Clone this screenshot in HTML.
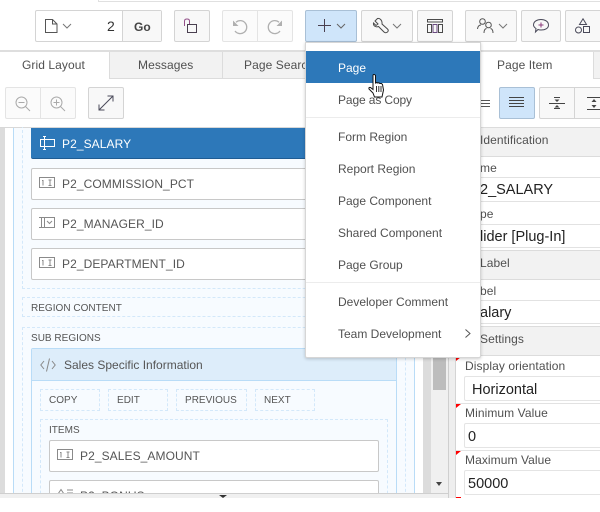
<!DOCTYPE html>
<html><head><meta charset="utf-8"><style>
html,body{margin:0;padding:0}
body{width:600px;height:498px;overflow:hidden;position:relative;background:#fff;font-family:"Liberation Sans",sans-serif;font-size:12px;color:#404040}
.a{position:absolute;box-sizing:border-box}
.t{position:absolute;white-space:nowrap;line-height:16px;letter-spacing:.08px;color:#505050}
.btn{position:absolute;box-sizing:border-box;background:#f8f8f8;border:1px solid #d4d4d4;border-radius:2px}
.item{position:absolute;box-sizing:border-box;background:#fff;border:1px solid #c8c8c8;border-radius:2px;height:32px}
.d{position:absolute;box-sizing:border-box;border:1px dashed #d3e8fa}
.cap{position:absolute;font-size:10px;color:#555;white-space:nowrap;line-height:12px;letter-spacing:.02px}
.it{position:absolute;font-size:12px;color:#555;white-space:nowrap;line-height:16px;letter-spacing:.08px}
.mi{position:absolute;left:338px;color:#505050;white-space:nowrap;line-height:16px;letter-spacing:0}
.hd{position:absolute;left:456px;width:144px;box-sizing:border-box;background:#f2f2f2;border-top:1px solid #dcdcdc;border-bottom:1px solid #dcdcdc}
.lb{position:absolute;color:#505050;white-space:nowrap;line-height:14px;letter-spacing:.08px}
.v{position:absolute;color:#222;font-size:14.5px;white-space:nowrap;line-height:18px}
.ln{position:absolute;left:456px;width:144px;height:1px;background:#e2e2e2}
svg{position:absolute;overflow:visible;fill:none}
</style></head><body>

<!-- top sliver -->
<div class="a" style="left:98px;top:0;width:502px;height:2px;border-bottom:1px solid #e0e0e0;border-left:1px solid #e0e0e0"></div>

<!-- toolbar -->
<div class="btn" style="left:35px;top:10px;width:127px;height:32px;background:#fff"></div>
<div class="a" style="left:122px;top:11px;width:39px;height:30px;background:#f8f8f8;border-left:1px solid #d4d4d4"></div>
<svg style="left:45px;top:19px" width="14" height="14" stroke="#555"><path d="M.5.5H7.500L12 5V13.500H.5ZM7.500.5V5H12"/></svg>
<svg style="left:62px;top:23px" width="10" height="6" stroke="#777"><path d="M1 1L5 5L9 1"/></svg>
<div class="t" style="left:107px;top:18px;font-size:14px;color:#333;letter-spacing:0">2</div>
<div class="t" style="left:134px;top:19px;font-weight:bold;color:#444;letter-spacing:0">Go</div>
<div class="btn" style="left:174px;top:10px;width:36px;height:32px"></div>
<svg style="left:184px;top:18px" width="16" height="16" stroke="#4a4050"><path d="M.5 8V3Q.5 1 3 1T5.500 3V6" stroke="#94508a"/><rect x="3.500" y="6.500" width="9" height="8"/></svg>
<div class="btn" style="left:222px;top:10px;width:71px;height:32px;background:#fbfbfb;border-color:#e4e4e4"></div>
<div class="a" style="left:257px;top:11px;width:1px;height:30px;background:#e4e4e4"></div>
<svg style="left:232px;top:19px" width="16" height="15" stroke="#b0b0b0" stroke-width="1.300"><path d="M4 3.200A6.500 6.500 0 1 1 3 12"/><path d="M1 1.500V7H6.500Z" fill="#b0b0b0" stroke="none"/></svg>
<svg style="left:267px;top:19px" width="16" height="15" stroke="#b0b0b0" stroke-width="1.300"><path d="M12 3.200A6.500 6.500 0 1 0 13 12"/><path d="M15 1.500V7H9.500Z" fill="#b0b0b0" stroke="none"/></svg>

<div class="btn" style="left:305px;top:10px;width:52px;height:32px;background:#cfe5fa;border-color:#a9c0d6"></div>
<svg style="left:318px;top:19px" width="14" height="14" stroke="#4a4050"><path d="M6.500 0V13"/><path d="M0 6.500H13"/></svg>
<svg style="left:336px;top:23px" width="10" height="6" stroke="#666"><path d="M1 1L5 5L9 1"/></svg>
<div class="btn" style="left:361px;top:10px;width:52px;height:32px"></div>
<svg style="left:373px;top:18px" width="17" height="16" stroke="#4a4a4a"><path d="M4.500.5L2 3L5 6L3 7.500L.5 5C0 8 3 9.500 5.500 8.500L11 14Q12.500 15.500 14.500 14Q16 12.500 14.500 11L9 6C9.500 2.500 7 0 4.500.5Z"/></svg>
<svg style="left:392px;top:23px" width="10" height="6" stroke="#777"><path d="M1 1L5 5L9 1"/></svg>
<div class="btn" style="left:417px;top:10px;width:36px;height:32px"></div>
<svg style="left:427px;top:19px" width="16" height="14" stroke="#4a4a4a"><path d="M.5.500H15.500V3H.5Z"/><path d="M.5 5.500H4.500V13.500H.5Z"/><path d="M6 5.500H10V13.500H6Z" stroke="#6a4a80"/><path d="M11.500 5.500H15.500V13.500H11.500Z"/></svg>
<div class="btn" style="left:465px;top:10px;width:52px;height:32px"></div>
<svg style="left:477px;top:18px" width="18" height="16" stroke="#555"><circle cx="5.500" cy="3.500" r="2.800"/><path d="M.5 11Q1 7 4 7"/><circle cx="11.500" cy="7" r="2.800"/><path d="M7 15Q7 11 9.500 10.500M16 15Q16 11 13.500 10.500"/></svg>
<svg style="left:498px;top:23px" width="10" height="6" stroke="#777"><path d="M1 1L5 5L9 1"/></svg>
<div class="btn" style="left:521px;top:10px;width:40px;height:32px"></div>
<svg style="left:533px;top:19px" width="17" height="16" stroke="#4a4a5a"><path d="M8 .5C12 .5 15.500 2.500 15.500 6S12 11 8 11C7 11 6 11 5 10.500L2.500 13L3 9.500C1.500 8.500 .5 7.500 .5 6C.5 2.500 4 .5 8 .5Z"/><path d="M8 3.500V8.500M5.500 6H10.500" stroke="#8a3a7a"/></svg>
<div class="btn" style="left:565px;top:10px;width:40px;height:32px"></div>
<svg style="left:575px;top:18px" width="16" height="17" stroke="#4a4a5a"><path d="M8 .8L11.500 6.500H4.500Z"/><circle cx="3.500" cy="12" r="3"/><rect x="8.500" y="8.500" width="6" height="6"/></svg>

<!-- tab strip -->
<div class="a" style="left:0;top:50px;width:600px;height:2px;background:#dedede"></div>
<div class="a" style="left:109px;top:52px;width:197px;height:27px;background:#f2f2f2;border-bottom:1px solid #dcdcdc;border-left:1px solid #dcdcdc"></div>
<div class="a" style="left:222px;top:52px;width:1px;height:27px;background:#dcdcdc"></div>
<div class="a" style="left:593px;top:52px;width:7px;height:27px;background:#f2f2f2;border-left:1px solid #dcdcdc;border-bottom:1px solid #dcdcdc"></div>
<div class="t" style="left:22px;top:57px">Grid Layout</div>
<div class="t" style="left:138px;top:57px">Messages</div>
<div class="t" style="left:244px;top:57px">Page Search</div>
<div class="t" style="left:497px;top:57px">Page Item</div>

<!-- second row -->
<div class="btn" style="left:5px;top:87px;width:71px;height:32px;background:#fbfbfb;border-color:#e4e4e4"></div>
<div class="a" style="left:40px;top:88px;width:1px;height:30px;background:#e4e4e4"></div>
<svg style="left:15px;top:96px" width="16" height="16" stroke="#aaa"><circle cx="6.500" cy="6.500" r="5.500"/><path d="M3.500 6.500H9.500M10.500 10.500L15 15"/></svg>
<svg style="left:50px;top:96px" width="16" height="16" stroke="#aaa"><circle cx="6.500" cy="6.500" r="5.500"/><path d="M3.500 6.500H9.500M6.500 3.500V9.500M10.500 10.500L15 15"/></svg>
<div class="btn" style="left:88px;top:87px;width:36px;height:32px"></div>
<svg style="left:98px;top:95px" width="16" height="16" stroke="#4a4a5a"><path d="M1 15L15 1M9.500 1H15V6.500M1 9.500V15H6.500"/></svg>
<svg style="left:480px;top:100px" width="10" height="7" stroke="#555"><path d="M0 .5H10M0 3.500H10M0 6.500H10"/></svg>
<div class="btn" style="left:499px;top:87px;width:36px;height:32px;background:#cfe5fa;border-color:#a9c0d6"></div>
<svg style="left:509px;top:97px" width="16" height="12" stroke="#444"><path d="M0 .5H15M0 3.500H15M0 6.500H15M0 9.500H15"/></svg>
<div class="btn" style="left:539px;top:87px;width:70px;height:32px"></div>
<div class="a" style="left:574px;top:88px;width:1px;height:30px;background:#d4d4d4"></div>
<svg style="left:549px;top:97px" width="16" height="13" stroke="#444"><path d="M0 6.500H16M5 .5H11M5 11.500H11"/><path d="M8 5L5.500 2.500H10.500ZM8 8L5.500 10.500H10.500Z" fill="#444" stroke="none"/></svg>
<svg style="left:585px;top:97px" width="15" height="13" stroke="#444"><path d="M2 .5H15M2 12.500H15"/><path d="M9 2L6.500 5H11.500ZM9 11L6.500 8H11.500Z" fill="#444" stroke="none"/></svg>

<!-- left panel, clipped to its scroll viewport -->
<div class="a" style="left:0;top:0;width:448px;height:498px;clip-path:inset(127px 0 5px 0)">
<div class="a" style="left:0;top:127px;width:448px;height:366px;background:#fff;border-top:1px solid #d8d8d8"></div>
<div class="a" style="left:0;top:128px;width:5px;height:365px;background:#dcdcdc"></div>
<div class="a" style="left:13px;top:128px;width:402px;height:365px;background:#f7fbff;border-left:1px solid #b9dcf7;border-right:1px solid #b9dcf7"></div>

<!-- scrollbar -->
<div class="a" style="left:423px;top:128px;width:8px;height:365px;background:#dcdcdc"></div>
<div class="a" style="left:431px;top:128px;width:17px;height:365px;background:#f0f0f0"></div>
<div class="a" style="left:433px;top:128px;width:13px;height:262px;background:#bdbdbd"></div>
<div class="a" style="left:436px;top:482px;width:0;height:0;border-left:3.500px solid transparent;border-right:3.500px solid transparent;border-top:4px solid #444"></div>

<!-- items region -->
<div class="d" style="left:22px;top:120px;width:384px;height:169px"></div>
<div class="a" style="left:31px;top:128px;width:300px;height:31px;background:#2d78b9;border-bottom:1px solid #1f5c93;border-radius:0 0 0 2px"></div>
<svg style="left:40px;top:136px" width="15" height="15" stroke="#fff"><path d="M.5 3.500H14.500V10.500H.5ZM4.500 .5V13.500M3 .5H6M3 13.500H6"/></svg>
<div class="it" style="left:62px;top:136px;color:#fff">P2_SALARY</div>
<div class="item" style="left:31px;top:168px;width:300px"></div>
<svg style="left:39px;top:177px" width="16" height="14" stroke="#8a8a8a"><rect x=".5" y=".5" width="15" height="10"/><path d="M4 3V8.500M3 3.500H4M9.500 3H12.500M9.500 8.500H12.500M11 3V8.500"/></svg>
<div class="it" style="left:62px;top:176px">P2_COMMISSION_PCT</div>
<div class="item" style="left:31px;top:208px;width:300px"></div>
<svg style="left:39px;top:217px" width="16" height="14" stroke="#8a8a8a"><path d="M0 .5H5M0 10.500H5M2.500 .5V10.500M5.500 .5H15.500V10.500H5.500Z"/><path d="M8 4L10.500 6.500L13 4"/></svg>
<div class="it" style="left:62px;top:216px">P2_MANAGER_ID</div>
<div class="item" style="left:31px;top:248px;width:300px"></div>
<svg style="left:39px;top:257px" width="16" height="14" stroke="#8a8a8a"><rect x=".5" y=".5" width="15" height="10"/><path d="M4 3V8.500M3 3.500H4M9.500 3H12.500M9.500 8.500H12.500M11 3V8.500"/></svg>
<div class="it" style="left:62px;top:256px">P2_DEPARTMENT_ID</div>

<div class="d" style="left:22px;top:297px;width:384px;height:20px"></div>
<div class="cap" style="left:31px;top:303px">REGION CONTENT</div>
<div class="d" style="left:22px;top:327px;width:384px;height:180px"></div>
<div class="cap" style="left:31px;top:333px">SUB REGIONS</div>

<!-- Sales region -->
<div class="a" style="left:31px;top:348px;width:366px;height:150px;background:#f7fbff;border:1px solid #b9dcf7;border-radius:2px 2px 0 0"></div>
<div class="a" style="left:32px;top:349px;width:364px;height:32px;background:#ddedfa;border-bottom:1px solid #b9dcf7"></div>
<svg style="left:40px;top:358px" width="16" height="14" stroke="#888"><path d="M4 3L.8 7L4 11M12 3L15.200 7L12 11"/><path d="M9.500 .5L6.500 13.500"/></svg>
<div class="it" style="left:64px;top:357px;letter-spacing:0">Sales Specific Information</div>
<div class="d" style="left:40px;top:389px;width:60px;height:22px"></div>
<div class="cap" style="left:49px;top:395px">COPY</div>
<div class="d" style="left:108px;top:389px;width:60px;height:22px"></div>
<div class="cap" style="left:117px;top:395px">EDIT</div>
<div class="d" style="left:176px;top:389px;width:71px;height:22px"></div>
<div class="cap" style="left:185px;top:395px">PREVIOUS</div>
<div class="d" style="left:255px;top:389px;width:60px;height:22px"></div>
<div class="cap" style="left:264px;top:395px">NEXT</div>
<div class="d" style="left:40px;top:419px;width:348px;height:90px"></div>
<div class="cap" style="left:49px;top:425px">ITEMS</div>
<div class="item" style="left:49px;top:440px;width:330px"></div>
<svg style="left:57px;top:449px" width="16" height="14" stroke="#8a8a8a"><rect x=".5" y=".5" width="15" height="10"/><path d="M4 3V8.500M3 3.500H4M9.500 3H12.500M9.500 8.500H12.500M11 3V8.500"/></svg>
<div class="it" style="left:80px;top:448px">P2_SALES_AMOUNT</div>
<div class="item" style="left:49px;top:480px;width:330px"></div>
<svg style="left:58px;top:489px" width="16" height="8" stroke="#8a8a8a"><path d="M0 5L3 .5L6 5M9 1H15M9 4H15"/></svg>
<div class="it" style="left:80px;top:488px">P2_BONUS</div>
</div>

<!-- right panel -->
<div class="a" style="left:448px;top:120px;width:8px;height:378px;background:#eeeeee;border-left:1px solid #cfcfcf;border-right:1px solid #d4d4d4"></div>
<div class="a" style="left:456px;top:120px;width:144px;height:378px;background:#fff"></div>
<div class="hd" style="top:127px;height:30px"></div>
<div class="t" style="left:480px;top:132px">Identification</div>
<div class="lb" style="left:480px;top:161px">me</div>
<div class="ln" style="top:177px"></div><div class="ln" style="top:201px"></div>
<div class="v" style="left:480px;top:181px">2_SALARY</div>
<div class="lb" style="left:480px;top:207px">pe</div>
<div class="ln" style="top:224px"></div><div class="ln" style="top:247px"></div>
<div class="v" style="left:480px;top:228px">lider [Plug-In]</div>
<div class="hd" style="top:250px;height:30px"></div>
<div class="t" style="left:480px;top:255px">Label</div>
<div class="lb" style="left:480px;top:284px">bel</div>
<div class="ln" style="top:300px"></div><div class="ln" style="top:323px"></div>
<div class="v" style="left:480px;top:304px">alary</div>
<div class="hd" style="top:326px;height:30px"></div>
<div class="t" style="left:480px;top:331px">Settings</div>

<div class="a" style="left:456px;top:357px;width:0;height:0;border-top:4px solid #f00;border-right:5px solid transparent"></div>
<div class="lb" style="left:465px;top:359px">Display orientation</div>
<div class="a" style="left:464px;top:376px;width:140px;height:25px;border:1px solid #e4e4e4;border-radius:2px"></div>
<div class="v" style="left:472px;top:381px">Horizontal</div>
<div class="ln" style="top:403px"></div>
<div class="a" style="left:456px;top:404px;width:0;height:0;border-top:4px solid #f00;border-right:5px solid transparent"></div>
<div class="lb" style="left:465px;top:406px">Minimum Value</div>
<div class="a" style="left:464px;top:423px;width:140px;height:25px;border:1px solid #e4e4e4;border-radius:2px"></div>
<div class="v" style="left:468px;top:428px">0</div>
<div class="ln" style="top:450px"></div>
<div class="a" style="left:456px;top:451px;width:0;height:0;border-top:4px solid #f00;border-right:5px solid transparent"></div>
<div class="lb" style="left:465px;top:453px">Maximum Value</div>
<div class="a" style="left:464px;top:470px;width:140px;height:25px;border:1px solid #e4e4e4;border-radius:2px"></div>
<div class="v" style="left:468px;top:475px">50000</div>
<div class="a" style="left:456px;top:497px;width:5px;height:1px;background:#f00"></div>

<!-- bottom bar -->
<div class="a" style="left:0;top:493px;width:448px;height:5px;background:#f0f0f0;border-top:1px solid #cfcfcf"></div>
<div class="a" style="left:219px;top:495px;width:0;height:0;border-left:4px solid transparent;border-right:4px solid transparent;border-top:3px solid #333"></div>

<!-- dropdown -->
<div class="a" style="left:305px;top:42px;width:176px;height:316px;background:#fff;border:1px solid #d6d6d6;border-radius:0 0 2px 2px;box-shadow:0 1px 3px rgba(0,0,0,.2)"></div>
<div class="a" style="left:306px;top:51px;width:174px;height:32px;background:#2d78b9"></div>
<div class="mi" style="top:60px;color:#fff">Page</div>
<div class="mi" style="top:92px;letter-spacing:-.12px">Page as Copy</div>
<div class="a" style="left:306px;top:117px;width:174px;height:1px;background:#ececec"></div>
<div class="mi" style="top:129px">Form Region</div>
<div class="mi" style="top:161px">Report Region</div>
<div class="mi" style="top:193px">Page Component</div>
<div class="mi" style="top:225px">Shared Component</div>
<div class="mi" style="top:257px">Page Group</div>
<div class="a" style="left:306px;top:282px;width:174px;height:1px;background:#ececec"></div>
<div class="mi" style="top:294px">Developer Comment</div>
<div class="mi" style="top:326px">Team Development</div>
<svg style="left:465px;top:329px" width="6" height="9" stroke="#555"><path d="M.5.500L5 4.500L.5 8.500"/></svg>

<!-- cursor -->
<svg style="left:368px;top:74px" width="18" height="24"><path d="M5 1.500Q5 .5 6 .5T7.500 1.500V9L9 8.500L9.500 9L11 8.800L11.800 9.500L13.500 9.500L14.500 10.500L15.500 16L14 23H6.500L5 19L1 15Q.5 13 2.500 13.500L5 15.500Z" fill="#fff" stroke="#111" stroke-width="1"/><path d="M8.500 12V18M10.800 12V18M13 12V18" stroke="#333"/></svg>
</body></html>
